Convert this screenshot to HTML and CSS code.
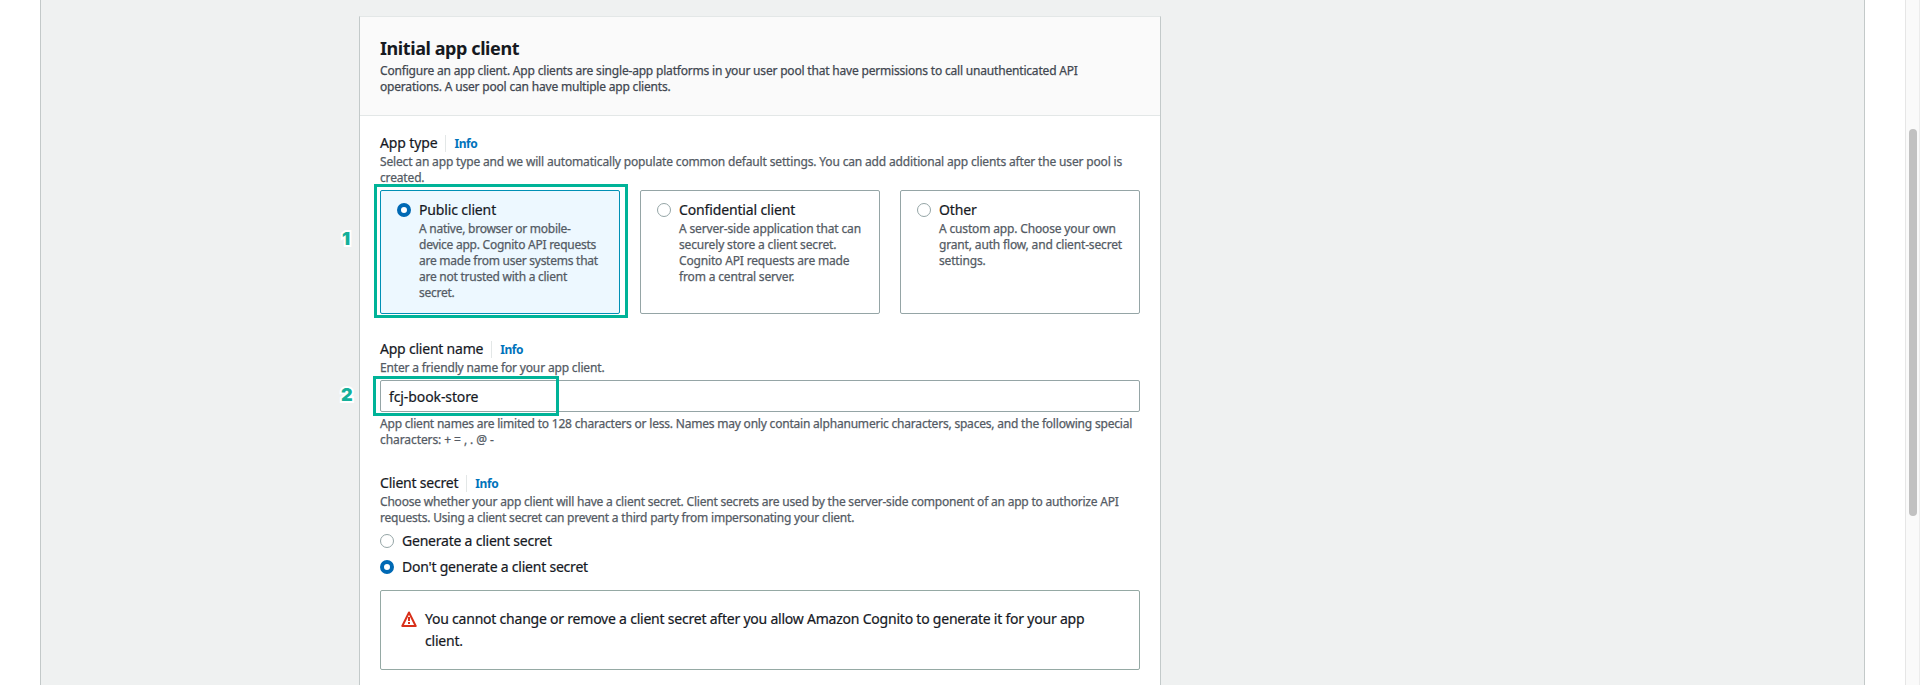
FILE: index.html
```html
<!DOCTYPE html>
<html lang="en">
<head>
<meta charset="utf-8">
<title>Initial app client</title>
<link rel="stylesheet" href="styles.css">
</head>
<body>
<div class="page">
  <main class="content">
    <section class="card">
      <header class="card-header">
        <h2 class="card-title">Initial app client</h2>
        <p class="hint hint-dark">Configure an app client. App clients are single-app platforms in your user pool that have permissions to call unauthenticated API<br>operations. A user pool can have multiple app clients.</p>
      </header>
      <div class="card-body">
        <div class="field">
          <div class="label-row"><span class="label label-loose">App type</span><a class="info">Info</a></div>
          <p class="hint">Select an app type and we will automatically populate common default settings. You can add additional app clients after the user pool is<br>created.</p>
          <div class="tiles">
            <div class="tile tile-selected">
              <span class="radio radio-on"></span>
              <div>
                <div class="label label-loose">Public client</div>
                <p class="hint hint-tight">A native, browser or mobile-<br>device app. Cognito API requests<br>are made from user systems that<br>are not trusted with a client<br>secret.</p>
              </div>
              <span class="mark mark-tile"><b class="mark-number">1</b></span>
            </div>
            <div class="tile">
              <span class="radio"></span>
              <div>
                <div class="label label-loose">Confidential client</div>
                <p class="hint">A server-side application that can<br>securely store a client secret.<br>Cognito API requests are made<br>from a central server.</p>
              </div>
            </div>
            <div class="tile">
              <span class="radio"></span>
              <div>
                <div class="label label-loose">Other</div>
                <p class="hint">A custom app. Choose your own<br>grant, auth flow, and client-secret<br>settings.</p>
              </div>
            </div>
          </div>
        </div>
        <div class="field">
          <div class="label-row"><span class="label">App client name</span><a class="info">Info</a></div>
          <p class="hint">Enter a friendly name for your app client.</p>
          <div class="input"><span class="value">fcj-book-store</span><span class="mark mark-input"><b class="mark-number mark-number-2">2</b></span></div>
          <p class="hint hint-snug">App client names are limited to 128 characters or less. Names may only contain alphanumeric characters, spaces, and the following special<br><span class="symbols">characters: + = , . @ -</span></p>
        </div>
        <div class="field">
          <div class="label-row"><span class="label">Client secret</span><a class="info">Info</a></div>
          <p class="hint hint-snug">Choose whether your app client will have a client secret. Client secrets are used by the server-side component of an app to authorize API<br>requests. Using a client secret can prevent a third party from impersonating your client.</p>
          <div class="options">
            <div class="option"><span class="radio"></span><span class="label">Generate a client secret</span></div>
            <div class="option"><span class="radio radio-on"></span><span class="label">Don't generate a client secret</span></div>
          </div>
          <div class="alert">
            <svg class="alert-icon" viewBox="0 0 16 16" width="16" height="16" fill="none" stroke="#d9301a" stroke-width="2">
              <path d="M8 1.5 L14.7 15 H1.3 Z" stroke-linejoin="round"/>
              <path d="M8 6v4M8 11v2"/>
            </svg>
            <p class="label alert-text">You cannot change or remove a client secret after you allow Amazon Cognito to generate it for your app<br>client.</p>
          </div>
        </div>
      </div>
    </section>
  </main>
  <div class="scrollbar"><div class="thumb"></div></div>
</div>
</body>
</html>
```
FILE: styles.css
```css
* { box-sizing: border-box; }
body {
  margin: 0;
  background: #fff;
  color: #16191f;
  font-family: "Noto Sans", "Open Sans", sans-serif;
}
p, h2 { margin: 0; }
.page {
  display: flex;
  justify-content: space-between;
  height: 685px;
  overflow: hidden;
  padding-left: 40px;
}
.content {
  width: 1825px;
  padding: 16px 0 0 318px;
  background: #eff1f1;
  border-left: 1px solid #c3c9c9;
  border-right: 1px solid #c3c9c9;
}
.card {
  width: 802px;
  height: 760px;
  background: #fff;
  border: 1px solid #c3caca;
  border-top-color: #e3e7e7;
}
.card-header {
  height: 99px;
  padding: 20px 20px 0;
  background: #fafafa;
  border-bottom: 1px solid #e3e7e7;
}
.card-title {
  margin-bottom: 4px;
  font-size: 18px;
  line-height: 22px;
  letter-spacing: -0.42px;
}
.hint {
  color: #545b64;
  font-size: 12px;
  line-height: 16px;
  letter-spacing: -0.158px;
  white-space: nowrap;
  -webkit-text-stroke: 0.25px currentColor;
}
.hint-dark { color: #414750; letter-spacing: -0.188px; }
.hint-snug { letter-spacing: -0.203px; }
.hint-tight { letter-spacing: -0.25px; }
.symbols { letter-spacing: -0.08px; }
.label {
  font-size: 14px;
  line-height: 22px;
  letter-spacing: -0.22px;
  white-space: nowrap;
  -webkit-text-stroke: 0.2px currentColor;
}
.label-loose { letter-spacing: -0.14px; }
.card-body {
  display: flex;
  flex-direction: column;
  gap: 24px;
  padding: 16px 20px;
}
.label-row { display: flex; align-items: center; height: 22px; }
.info {
  margin-left: 8px;
  padding-left: 8px;
  border-left: 1px solid #e3e7e7;
  color: #0073bb;
  font-size: 12px;
  font-weight: 700;
  line-height: 17px;
  letter-spacing: -0.4px;
}
.tiles {
  display: grid;
  grid-template-columns: repeat(3, 240px);
  gap: 20px;
  margin-top: 4px;
}
.tile {
  position: relative;
  display: flex;
  gap: 8px;
  height: 124px;
  padding: 8px 16px;
  border: 1px solid #95a5a6;
  border-radius: 2px;
}
.tile-selected { background: #edf8ff; border-color: #0090b5; }
.radio {
  flex: none;
  width: 14px;
  height: 14px;
  margin-top: 4px;
  background: #fff;
  border: 1px solid #95a5a6;
  border-radius: 50%;
}
.radio-on { border: 4px solid #0069b4; }
.input {
  position: relative;
  height: 32px;
  margin: 4px 0;
  padding: 5px 8px;
  border: 1px solid #95a5a6;
  border-radius: 2px;
}
.value {
  display: block;
  font-size: 14px;
  line-height: 22px;
  letter-spacing: -0.1px;
  -webkit-text-stroke: 0.2px currentColor;
}
.mark { position: absolute; border: 3px solid #00b398; }
.mark-tile { left: -7px; top: -7px; width: 254px; height: 134px; }
.mark-input { left: -8px; top: -5px; width: 186px; height: 40px; }
.mark-number {
  position: absolute;
  left: -35px;
  top: 41px;
  color: #14b09a;
  font: 900 18px/22px Inter, sans-serif;
  -webkit-text-stroke: 4px #fff;
  paint-order: stroke fill;
}
.mark-number-2 { left: -35px; top: 5px; }
.options {
  display: flex;
  flex-direction: column;
  gap: 4px;
  margin-top: 4px;
}
.option { display: flex; gap: 8px; }
.alert {
  display: flex;
  gap: 8px;
  height: 80px;
  margin-top: 12px;
  padding: 17px 20px;
  border: 1px solid #95a9a4;
  border-radius: 2px;
}
.alert-icon { flex: none; margin-top: 3px; }
.scrollbar {
  width: 15px;
  padding: 129px 0 0 3px;
  background: #fafafa;
  border-left: 1px solid #e6e6e6;
  border-right: 1px solid #ececec;
}
.thumb { width: 8px; height: 387px; background: #c1c1c1; border-radius: 4px; }
```
